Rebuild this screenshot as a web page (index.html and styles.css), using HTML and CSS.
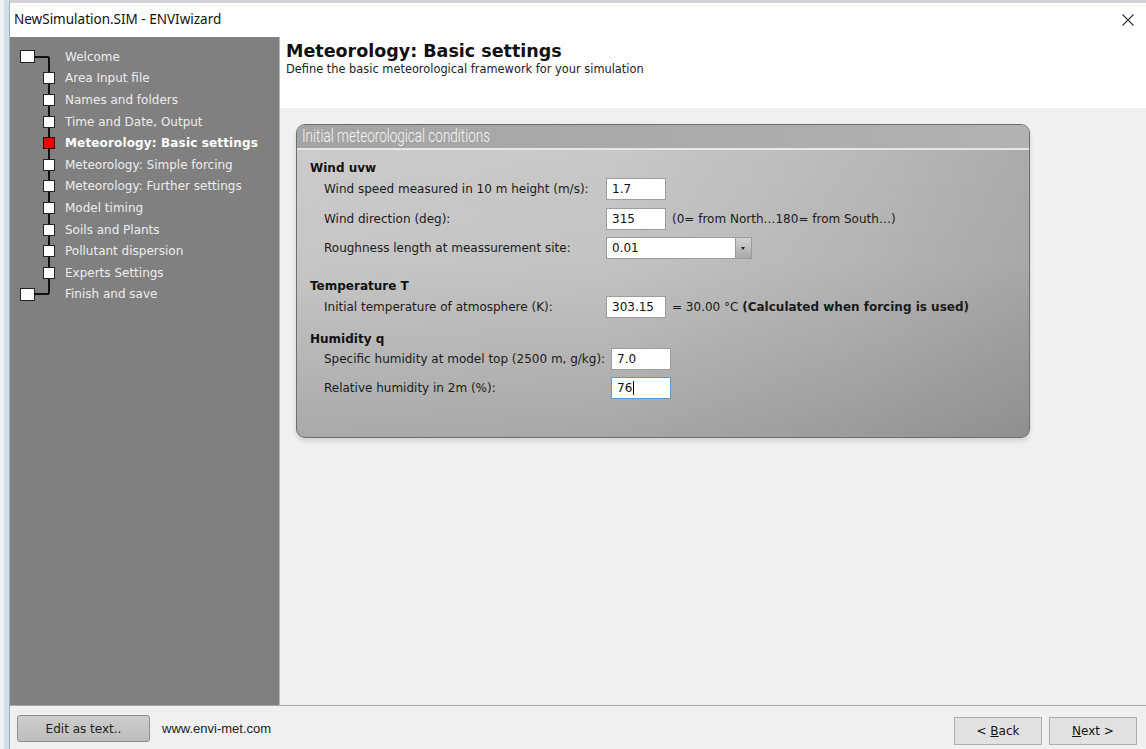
FILE: index.html
```html
<!DOCTYPE html>
<html lang="en">
<head>
<meta charset="utf-8">
<title>NewSimulation.SIM - ENVIwizard</title>
<link rel="stylesheet" href="styles.css">
</head>
<body>
<div class="window">
  <header class="titlebar">
    <span class="titlebar-text">NewSimulation.SIM - ENVIwizard</span>
    <span class="close-btn" aria-label="Close">
      <svg width="12" height="12" viewBox="0 0 12 12"><path d="M0.5 0.5 L11.5 11.5 M11.5 0.5 L0.5 11.5" stroke="#333" stroke-width="1.1" fill="none"/></svg>
    </span>
  </header>

  <div class="main">
    <nav class="sidebar">
      <ul class="steps">
        <li class="step root"><span class="node"></span>Welcome</li>
        <li class="step"><span class="node"></span>Area Input file</li>
        <li class="step"><span class="node"></span>Names and folders</li>
        <li class="step"><span class="node"></span>Time and Date, Output</li>
        <li class="step active"><span class="node"></span>Meteorology: Basic settings</li>
        <li class="step"><span class="node"></span>Meteorology: Simple forcing</li>
        <li class="step"><span class="node"></span>Meteorology: Further settings</li>
        <li class="step"><span class="node"></span>Model timing</li>
        <li class="step"><span class="node"></span>Soils and Plants</li>
        <li class="step"><span class="node"></span>Pollutant dispersion</li>
        <li class="step"><span class="node"></span>Experts Settings</li>
        <li class="step root"><span class="node"></span>Finish and save</li>
      </ul>
    </nav>

    <section class="content">
      <div class="page-head">
        <h1>Meteorology: Basic settings</h1>
        <p>Define the basic meteorological framework for your simulation</p>
      </div>

      <div class="page-body">
        <div class="panel">
          <div class="panel-title"><span class="panel-title-text">Initial meteorological conditions</span></div>
          <div class="panel-body">

            <div class="group">
              <div class="group-title">Wind uvw</div>
              <div class="field first">
                <span class="label">Wind speed measured in 10 m height (m/s):</span>
                <span class="input">1.7</span>
              </div>
              <div class="field">
                <span class="label">Wind direction (deg):</span>
                <span class="input">315</span>
                <span class="hint">(0= from North…180= from South…)</span>
              </div>
              <div class="field">
                <span class="label">Roughness length at meassurement site:</span>
                <span class="select"><span class="select-value">0.01</span><span class="select-btn"></span></span>
              </div>
            </div>

            <div class="group temp">
              <div class="group-title">Temperature T</div>
              <div class="field first">
                <span class="label">Initial temperature of atmosphere (K):</span>
                <span class="input">303.15</span>
                <span class="hint">= 30.00 °C <b>(Calculated when forcing is used)</b></span>
              </div>
            </div>

            <div class="group humid">
              <div class="group-title">Humidity q</div>
              <div class="field first">
                <span class="label wide">Specific humidity at model top (2500 m, g/kg):</span>
                <span class="input">7.0</span>
              </div>
              <div class="field">
                <span class="label wide">Relative humidity in 2m (%):</span>
                <span class="input focused">76<span class="caret"></span></span>
              </div>
            </div>

          </div>
        </div>
      </div>
    </section>
  </div>

  <footer class="footer">
    <span class="btn-edit">Edit as text..</span>
    <span class="site">www.envi-met.com</span>
    <span class="nav-buttons">
      <span class="btn">&lt;&nbsp;<u>B</u>ack</span>
      <span class="btn"><u>N</u>ext&nbsp;&gt;</span>
    </span>
  </footer>
</div>
</body>
</html>
```

FILE: styles.css
```css
* { box-sizing: border-box; }

html, body {
  margin: 0;
  padding: 0;
}

body {
  width: 1146px;
  height: 749px;
  overflow: hidden;
  background: linear-gradient(to right, #eef2f6 0, #eef2f6 4px, #d3dde8 4px);
  font-family: "DejaVu Sans", Verdana, sans-serif;
  font-size: 12px;
  color: #1a1a1a;
}

.window {
  margin-left: 9px;
  height: 749px;
  border-left: 1px solid #9aaec4;
  border-top: 3px solid #cfd3d8;
  background: #f0f0f0;
  display: flex;
  flex-direction: column;
}

/* ---------- title bar ---------- */
.titlebar {
  height: 34px;
  flex: none;
  background: #fff;
  display: flex;
  align-items: center;
  justify-content: space-between;
  padding: 0 12px 3px 4px;
}

.titlebar-text {
  font-family: "Noto Sans", "Open Sans", sans-serif;
  font-size: 13.5px;
  color: #111;
}

.close-btn {
  display: flex;
  margin-top: 3px;
}

/* ---------- main area ---------- */
.main {
  flex: none;
  height: 668px;
  display: flex;
}

.sidebar {
  width: 270px;
  flex: none;
  background: linear-gradient(to right, #808080 10px, #877f7a 10px, #877f7a 11px, #808080 11px);
  border-right: 1px solid #b8b8b8;
}

.steps {
  list-style: none;
  margin: 0;
  padding: 9px 0 0 0;
  position: relative;
}

/* vertical trunk joining all the step nodes */
.steps::before {
  content: "";
  position: absolute;
  left: 38px;
  top: 19.8px;
  width: 2px;
  height: 237.6px;
  background: #111;
}

.step {
  height: 21.6px;
  display: flex;
  align-items: center;
  color: #ededed;
  font-size: 12px;
  white-space: nowrap;
}

.node {
  position: relative;
  width: 12px;
  height: 12px;
  margin: 0 10px 0 33px;
  background: #fff;
  border: 1px solid #222;
  flex: none;
}

.step.root .node {
  width: 15px;
  height: 13px;
  margin: 0 30px 0 10px;
}

/* horizontal connector from a root node to the trunk */
.step.root .node::after {
  content: "";
  position: absolute;
  left: 100%;
  top: 4.5px;
  width: 15px;
  height: 2px;
  background: #111;
}

.step.active {
  color: #fff;
  font-weight: bold;
  letter-spacing: 0.15px;
}

.step.active .node {
  background: #ee0000;
  border-color: #3a0000;
}

/* ---------- content ---------- */
.content {
  flex: 1;
  display: flex;
  flex-direction: column;
}

.page-head {
  height: 71px;
  flex: none;
  background: #fff;
  padding: 4px 7px 0 6px;
}

.page-head h1 {
  margin: 0;
  font-size: 17.5px;
  font-weight: bold;
  line-height: 20px;
  color: #111;
}

.page-head p {
  margin: 1px 0 0 0;
  font-size: 11.4px;
  line-height: 14px;
  color: #222;
}

.page-body {
  flex: 1;
  background: #f0f0f0;
  padding: 16px 0 0 16px;
}

.panel {
  width: 734px;
  height: 314px;
  border: 1px solid #6e6e6e;
  border-radius: 9px;
  overflow: hidden;
  box-shadow: 0 3px 5px rgba(0, 0, 0, 0.12);
  background:
    linear-gradient(to bottom, rgba(0,0,0,0) 0%, rgba(0,0,0,0.03) 45%, rgba(0,0,0,0.17) 100%),
    linear-gradient(to right, #cccccc 0%, #c9c9c9 42%, #b9b9b9 78%, #acacac 100%);
}

.panel-title {
  height: 25px;
  padding-left: 5px;
  background: linear-gradient(to right, #a4a4a4, #aaaaaa 50%, #b2b2b2);
  border-bottom: 2px solid #e6e6e6;
  overflow: hidden;
  white-space: nowrap;
}

.panel-title-text {
  display: inline-block;
  font-family: Roboto, "DejaVu Sans", sans-serif;
  font-weight: 300;
  font-size: 19px;
  line-height: 22px;
  color: #f6f6f6;
  transform: scaleX(0.71);
  transform-origin: left center;
}

.panel-body {
  padding: 10px 0 0 13px;
}

.group-title {
  font-weight: bold;
  height: 16px;
  line-height: 16px;
  color: #111;
}

.group.temp { margin-top: 19px; }
.group.humid { margin-top: 13px; }

.field {
  display: flex;
  align-items: center;
  height: 22px;
  margin-top: 7px;
  padding-left: 14px;
}

.field.first { margin-top: 2px; }
.group:first-child .field:nth-child(3) { margin-top: 8px; }
.group.humid .field.first { margin-top: 1px; }

.label {
  width: 282px;
  flex: none;
  color: #1a1a1a;
  white-space: nowrap;
}

.label.wide { width: 287px; }

.input {
  width: 60px;
  height: 22px;
  flex: none;
  background: #fff;
  border: 1px solid #9c9c9c;
  padding-left: 5px;
  display: flex;
  align-items: center;
  color: #111;
}

.input.focused {
  border-color: #5a9bd0;
}

.caret {
  display: inline-block;
  width: 1px;
  height: 14px;
  background: #000;
  margin-left: 1px;
}

.hint {
  margin-left: 6px;
  white-space: nowrap;
  color: #1a1a1a;
}

.hint b { font-weight: bold; }

.select {
  width: 146px;
  height: 22px;
  flex: none;
  display: flex;
  background: #fff;
  border: 1px solid #9c9c9c;
}

.select-value {
  flex: 1;
  padding-left: 5px;
  display: flex;
  align-items: center;
  color: #111;
}

.select-btn {
  width: 16px;
  flex: none;
  position: relative;
  background: linear-gradient(to bottom, #d2d2d2, #a9a9a9);
  border-left: 1px solid #9a9a9a;
}

.select-btn::after {
  content: "";
  position: absolute;
  left: 5px;
  top: 9px;
  border-left: 2.5px solid transparent;
  border-right: 2.5px solid transparent;
  border-top: 3px solid #222;
}

/* ---------- footer ---------- */
.footer {
  flex: 1;
  display: flex;
  align-items: flex-start;
  padding: 9px 9px 0 7px;
  border-top: 1px solid #a6a6a6;
  background: #f0f0f0;
}

.btn-edit {
  width: 133px;
  height: 27px;
  display: flex;
  align-items: center;
  justify-content: center;
  border: 1px solid #8c8c8c;
  border-radius: 3px;
  background: linear-gradient(to bottom, #cdcdcd, #bdbdbd);
  color: #222;
}

.site {
  margin: 6px 0 0 12px;
  font-family: "Liberation Sans", Arial, sans-serif;
  font-size: 13px;
  color: #222;
}

.nav-buttons {
  margin-left: auto;
  margin-top: 2px;
  display: flex;
  gap: 7px;
}

.btn {
  width: 88px;
  height: 28px;
  display: flex;
  align-items: center;
  justify-content: center;
  background: #e1e1e1;
  border: 1px solid #adadad;
  color: #111;
}

.btn u { text-decoration: underline; }
```
